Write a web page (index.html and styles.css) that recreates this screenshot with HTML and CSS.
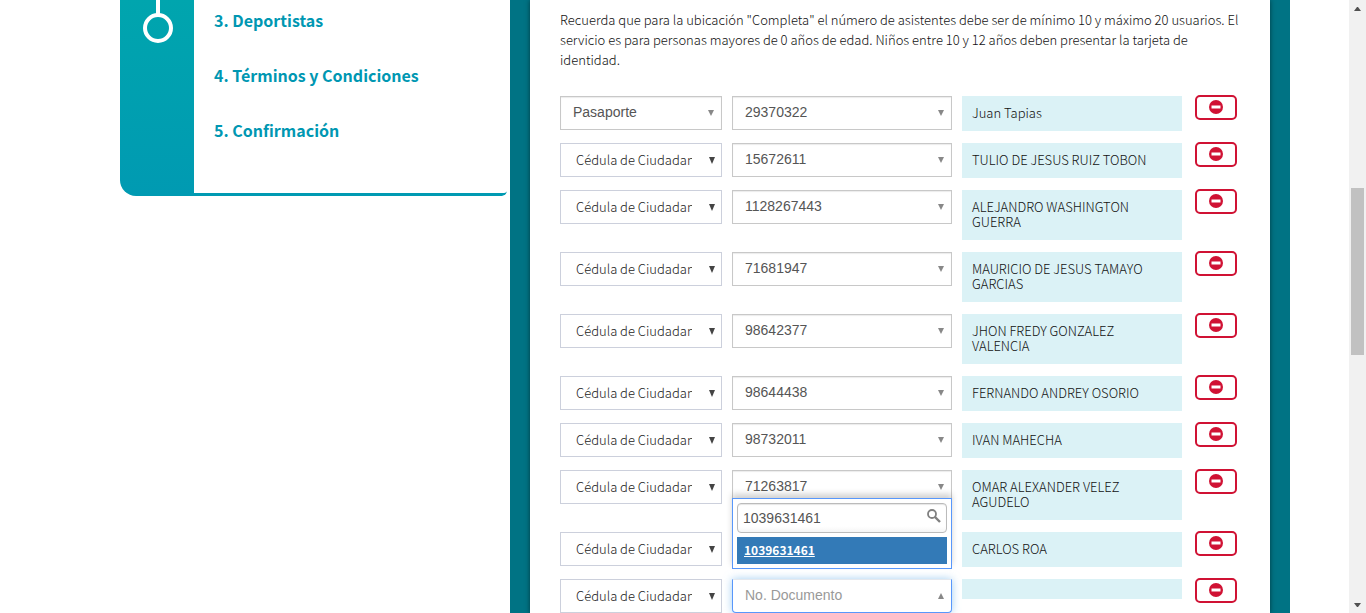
FILE: index.html
```
<!DOCTYPE html>
<html lang="es">
<head>
<meta charset="utf-8">
<title>Deportistas</title>
<link rel="stylesheet" href="styles.css">
</head>
<body>
<div class="window">
  <div class="page">
    <nav class="steps" aria-label="Pasos">
      <div class="rail">
        <svg width="30" height="43" viewBox="0 0 30 43" fill="none" stroke="#fff" stroke-width="4" aria-hidden="true"><path d="M15 0v15"/><circle cx="15" cy="28" r="13"/></svg>
      </div>
      <div class="step-list">
        <a href="#deportistas">3. Deportistas</a>
        <a href="#terminos">4. Términos y Condiciones</a>
        <a href="#confirmacion">5. Confirmación</a>
      </div>
    </nav>
    <main class="frame">
      <form class="panel" id="form">
        <p class="note">Recuerda que para la ubicación "Completa" el número de asistentes debe ser de mínimo 10 y máximo 20 usuarios. El servicio es para personas mayores de 0 años de edad. Niños entre 10 y 12 años deben presentar la tarjeta de identidad.</p>
        <div class="rows" id="rows"></div>
      </form>
    </main>
  </div>
  <div class="scrollbar" aria-hidden="true">
    <span class="arrow-cell"><svg width="7" height="4" viewBox="0 0 7 4"><path d="M0 4 3 0h1l3 4z" fill="#505050"/></svg></span>
    <span class="thumb"></span>
    <span class="arrow-cell down"><svg width="7" height="4" viewBox="0 0 7 4"><path d="M0 0h7L4 4H3z" fill="#505050"/></svg></span>
  </div>
</div>
<script src="rows.js"></script>
</body>
</html>
```
FILE: rows.js
```
const people = [
  ["29370322", "Juan Tapias"],
  ["15672611", "TULIO DE JESUS RUIZ TOBON"],
  ["1128267443", "ALEJANDRO WASHINGTON GUERRA"],
  ["71681947", "MAURICIO DE JESUS TAMAYO GARCIAS"],
  ["98642377", "JHON FREDY GONZALEZ VALENCIA"],
  ["98644438", "FERNANDO ANDREY OSORIO"],
  ["98732011", "IVAN MAHECHA"],
  ["71263817", "OMAR ALEXANDER VELEZ AGUDELO"],
  ["", "CARLOS ROA"],
  ["No. Documento", ""]
];

const dropdown = `<div class="dropdown">
  <div class="search">
    <input type="text" value="1039631461" aria-label="Buscar documento">
    <svg width="14" height="14" viewBox="0 0 14 14" fill="none" stroke="#808080" aria-hidden="true"><circle cx="5" cy="5" r="4" stroke-width="1.8"/><path d="M8 8l5 5" stroke-width="2.4"/></svg>
  </div>
  <button type="button" class="result">1039631461</button>
</div>`;

document.getElementById("rows").innerHTML = people.map(([doc, name], i) => {
  const first = i === 0;
  const open = i === people.length - 1;
  const type = first ? "Pasaporte" : "Cédula de Ciudadanía";
  return `<div class="row">
  <div class="field ${first ? "chosen" : "native"}"><select aria-label="Tipo de documento ${i + 1}"><option>${type}</option></select></div>
  <div class="field chosen ${open ? "open" : ""}"><select aria-label="No. Documento ${i + 1}"><option>${doc}</option></select>${open ? dropdown : ""}</div>
  <div class="name">${name}</div>
  <button type="button" class="remove" aria-label="Quitar asistente ${i + 1}"><svg width="14" height="14" viewBox="0 0 14 14" aria-hidden="true"><circle cx="7" cy="7" r="7" fill="#d01234"/><path d="M2.5 5.5h9v3h-9z" fill="#fff"/></svg></button>
</div>`;
}).join("");
```
FILE: styles.css
```
* { box-sizing: border-box; }

body {
  margin: 0;
  background: #fff;
  color: #111;
  font: 300 13px/20px "Noto Sans CJK SC", "Noto Sans", sans-serif;
}

.window {
  display: grid;
  grid-template-columns: 1fr 17px;
  height: 100vh;
  overflow: hidden;
}

.page {
  display: grid;
  grid-template-columns: 387px 1fr;
  gap: 3px;
  align-items: start;
  padding: 0 59px 0 120px;
}

.steps {
  display: grid;
  grid-template-columns: 74px 1fr;
  border-radius: 0 0 5px 16px;
  overflow: hidden;
}

.rail {
  display: flex;
  justify-content: center;
  background: linear-gradient(#00a5ae, #009ab2);
}

.rail svg { margin-left: 2px; }

.step-list {
  display: flex;
  flex-direction: column;
  gap: 35px;
  padding: 10px 20px 53px;
  border-bottom: 3px solid #009ab2;
  border-bottom-right-radius: 5px;
}

.step-list a {
  color: #0097b2;
  font-size: 16px;
  font-weight: 700;
  text-decoration: none;
}

.frame {
  min-height: 100vh;
  padding: 0 20px;
  background: #007384;
}

.panel {
  min-height: 100vh;
  padding: 10px 28px 0 30px;
  background: #fff;
  box-shadow: 0 0 5px rgba(0, 0, 0, .5);
}

.note { margin: 0 0 26px; }

.rows {
  display: grid;
  gap: 12px;
  margin-right: 5px;
}

.row {
  display: grid;
  grid-template-columns: 162fr 220fr 220fr 45px;
  gap: 10px;
  align-items: start;
}

.field {
  position: relative;
  display: grid;
}

.field select {
  appearance: none;
  width: 100%;
  height: 34px;
  border: 1px solid #c8c8c8;
  border-radius: 0;
  background: #fff;
  color: #555;
}

.native select {
  padding: 0 29px 2px 15px;
  border-color: #ccd0dc;
  color: #222;
  font: 300 13px "Noto Sans CJK SC", "Noto Sans", sans-serif;
}

.chosen select {
  padding: 0 30px 2px 12px;
  box-shadow: inset 0 1px 1px rgba(0, 0, 0, .08);
  font: 14px "Liberation Sans", Arial, sans-serif;
}

.field::after {
  content: "";
  position: absolute;
  top: 14px;
  right: 8px;
  border: 3px solid transparent;
  border-top: 6px solid #888;
  border-bottom: 0;
}

.native::after {
  right: 7px;
  border-top: 7px solid #444;
}

.field.open::after {
  border-top: 0;
  border-bottom: 6px solid #888;
}

.open select {
  border-color: #5897fb;
  border-top-color: #e4e8ee;
  border-radius: 0 0 4px 4px;
  box-shadow: 0 0 8px rgba(102, 175, 233, .6);
  color: #999;
}

.dropdown {
  position: absolute;
  bottom: calc(100% + 10px);
  left: 0;
  width: 100%;
  padding: 4px;
  border: 1px solid #5897fb;
  background: #fff;
  box-shadow: 0 -4px 6px rgba(0, 0, 0, .18);
}

.search {
  display: grid;
  position: relative;
  margin-bottom: 4px;
}

.search input {
  width: 100%;
  height: 30px;
  padding: 0 24px 0 5px;
  border: 1px solid #bbb;
  border-radius: 4px;
  background: linear-gradient(#fff 80%, #f5f5f5);
  box-shadow: inset 0 1px 1px rgba(0, 0, 0, .1);
  color: #555;
  font: 14px "Liberation Sans", Arial, sans-serif;
}

.search svg {
  position: absolute;
  top: 6px;
  right: 6px;
}

.result {
  display: block;
  width: 100%;
  height: 27px;
  padding: 0 7px 2px;
  border: 0;
  background: #337ab7;
  color: #fff;
  font: 700 12px "Noto Sans CJK SC", "Noto Sans", sans-serif;
  text-align: left;
  text-decoration: underline;
}

.name {
  padding: 9px 10px 11px;
  background: #dbf2f6;
  line-height: 15px;
}

.name:empty { padding: 10px; }

.remove {
  display: flex;
  align-items: center;
  justify-content: center;
  justify-self: end;
  width: 42px;
  height: 25px;
  margin-top: -1px;
  padding: 0 0 1px;
  border: 2px solid #d01234;
  border-radius: 5px;
  background: #fff;
}

.scrollbar {
  display: grid;
  grid-template-rows: 17px 171fr 167fr 241fr 17px;
  background: #f1f1f1;
}

.arrow-cell {
  display: grid;
  place-items: center;
}

.thumb {
  grid-row: 3;
  margin: 0 2px;
  background: #c1c1c1;
}

.down { grid-row: 5; }
```
